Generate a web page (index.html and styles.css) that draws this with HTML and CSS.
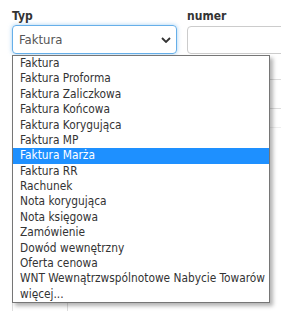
FILE: index.html
```html
<!DOCTYPE html>
<html lang="pl">
<head>
<meta charset="UTF-8">
<title>Dokument</title>
<link rel="stylesheet" href="styles.css">
</head>
<body>

<div class="form">
    <div class="row">
        <div class="field typ">
            <label>Typ</label>
            <div class="select">
                <span>Faktura</span>
                <svg class="chevron" width="10" height="6" viewBox="0 0 10 6"><path d="M1 1 L5 5 L9 1" fill="none" stroke="#333" stroke-width="1.8"/></svg>
            </div>
            <ul class="dropdown">
                <li>Faktura</li>
                <li>Faktura Proforma</li>
                <li>Faktura Zaliczkowa</li>
                <li>Faktura Końcowa</li>
                <li>Faktura Korygująca</li>
                <li>Faktura MP</li>
                <li class="active">Faktura Marża</li>
                <li>Faktura RR</li>
                <li>Rachunek</li>
                <li>Nota korygująca</li>
                <li>Nota księgowa</li>
                <li>Zamówienie</li>
                <li>Dowód wewnętrzny</li>
                <li>Oferta cenowa</li>
                <li>WNT Wewnątrzwspólnotowe Nabycie Towarów</li>
                <li>więcej...</li>
            </ul>
        </div>
        <div class="field numer">
            <label>numer</label>
            <div class="input"></div>
        </div>
    </div>

    <table class="grid">
        <tr class="r1"><td class="c1"></td><td></td></tr>
        <tr class="r2"><td class="c1"></td><td></td></tr>
        <tr class="r3"><td class="c1"></td><td></td></tr>
        <tr class="r4"><td class="c1"></td><td></td></tr>
    </table>
</div>

</body>
</html>
```

FILE: styles.css
```css
html, body {
  height: 100%;
  overflow: hidden;
}
body {
  margin: 0;
  padding: 0;
  background: #fff;
  font-family: 'DejaVu Sans Condensed', 'DejaVu Sans', sans-serif;
  color: #333;
}
.form {
  box-sizing: border-box;
  height: 100%;
  padding: 8px 0 0 12px;
  overflow: hidden;
}
.row {
  display: flex;
  gap: 10px;
}
.field {
  position: relative;
}
.field.numer {
  flex: 1;
}
.field label {
  display: block;
  font-size: 12px;
  font-weight: bold;
  line-height: 17px;
  color: #333;
}
.select {
  box-sizing: border-box;
  width: 165px;
  height: 29px;
  border: 1px solid #66afe9;
  border-radius: 4px;
  box-shadow: 0 0 4px rgba(102, 175, 233, 0.6);
  display: flex;
  align-items: center;
  justify-content: space-between;
  padding: 0 5px 0 6px;
  font-size: 13px;
  color: #555;
}
.chevron {
  margin-top: 1px;
}
.input {
  box-sizing: border-box;
  width: calc(100% + 10px);
  height: 28px;
  margin-top: 1px;
  border: 1px solid #ccc;
  border-radius: 4px;
}
.dropdown {
  position: absolute;
  left: 0;
  top: 47px;
  width: 258px;
  box-sizing: border-box;
  margin: 0;
  padding: 0;
  list-style: none;
  background: #fff;
  border: 1px solid #767676;
  box-shadow: 3px 3px 4px rgba(0, 0, 0, 0.3);
  z-index: 10;
}
.dropdown li {
  height: 15.375px;
  line-height: 15.375px;
  padding-left: 7px;
  font-size: 11.8px;
  color: #333;
  white-space: nowrap;
}
.dropdown li.active {
  background: #1e90ff;
  color: #fff;
}
.grid {
  margin-top: 8px;
  width: 100%;
  border-collapse: collapse;
}
.grid td {
  border-bottom: 1px solid #ddd;
  padding: 0;
}
.grid td.c1 {
  width: 54px;
  border-left: 1px solid #ddd;
  border-right: 1px solid #ddd;
}
.grid .r1 td { height: 17px; }
.grid .r2 td { height: 28px; }
.grid .r3 td { height: 18px; border-bottom-color: #eee; }
.grid .r4 td { height: 200px; }
```
